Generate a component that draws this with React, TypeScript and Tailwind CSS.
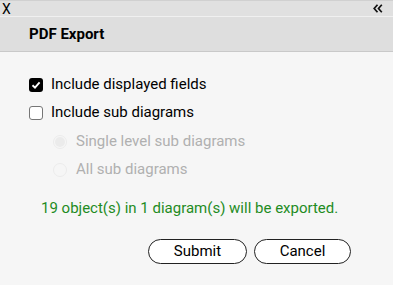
import React from "react";

export default function App() {
  return (
    <div className="w-[393px] h-[285px] bg-[#f6f6f6] flex flex-col text-black" style={{ fontFamily: "Roboto, 'Liberation Sans', sans-serif" }}>
      <div className="h-[17px] bg-[#e0e0e0] border-t border-t-[#d0d0d0] border-b border-b-[#f0f0f0] flex items-center justify-between px-[2px] shrink-0">
        <span className="text-[14px] leading-none">X</span>
        <svg width="10" height="9" viewBox="0 0 10 9" className="mr-[8px]">
          <path d="M4.5 0.8 L1.2 4.5 L4.5 8.2 M8.8 0.8 L5.5 4.5 L8.8 8.2" stroke="#111" strokeWidth="1.7" fill="none" />
        </svg>
      </div>
      <div className="h-[35px] bg-[#dedede] border-b border-[#c9c9c9] flex items-center pl-[29px] shrink-0">
        <span className="text-[15px] font-bold">PDF Export</span>
      </div>
      <div className="flex flex-col pl-[29px] pt-[25px]">
        <label className="flex items-center h-[15px] gap-[8px]">
          <span className="w-[14px] h-[14px] rounded-[3px] bg-black flex items-center justify-center">
            <svg width="10" height="10" viewBox="0 0 10 10">
              <path d="M1.5 5.2 L4 7.6 L8.6 2.4" stroke="white" strokeWidth="1.9" fill="none" />
            </svg>
          </span>
          <span className="text-[15px]">Include displayed fields</span>
        </label>
        <label className="flex items-center h-[15px] gap-[8px] mt-[13px]">
          <span className="w-[14px] h-[14px] rounded-[3px] bg-white border border-[#767676]" />
          <span className="text-[15px]">Include sub diagrams</span>
        </label>
        <div className="flex flex-col pl-[24px] mt-[14px] gap-[13px] text-[#b0b0b0]">
          <div className="flex items-center h-[15px] gap-[9px]">
            <span className="w-[14px] h-[14px] rounded-full border border-[#ececec] bg-[#f6f6f6] flex items-center justify-center">
              <span className="w-[10px] h-[10px] rounded-full bg-[#ebebeb]" />
            </span>
            <span className="text-[15px]">Single level sub diagrams</span>
          </div>
          <div className="flex items-center h-[15px] gap-[9px]">
            <span className="w-[14px] h-[14px] rounded-full border border-[#ececec] bg-[#f6f6f6]" />
            <span className="text-[15px]">All sub diagrams</span>
          </div>
        </div>
        <div className="mt-[22px] pl-[12px] text-[15px] text-[#1f8c1f] leading-[18px]">19 object(s) in 1 diagram(s) will be exported.</div>
        <div className="flex justify-end gap-[7px] mt-[22px] pr-[42px]">
          <button className="w-[99px] h-[25px] rounded-full border border-[#222] bg-white text-[15px] leading-none">Submit</button>
          <button className="w-[97px] h-[25px] rounded-full border border-[#222] bg-white text-[15px] leading-none">Cancel</button>
        </div>
      </div>
    </div>
  );
}
